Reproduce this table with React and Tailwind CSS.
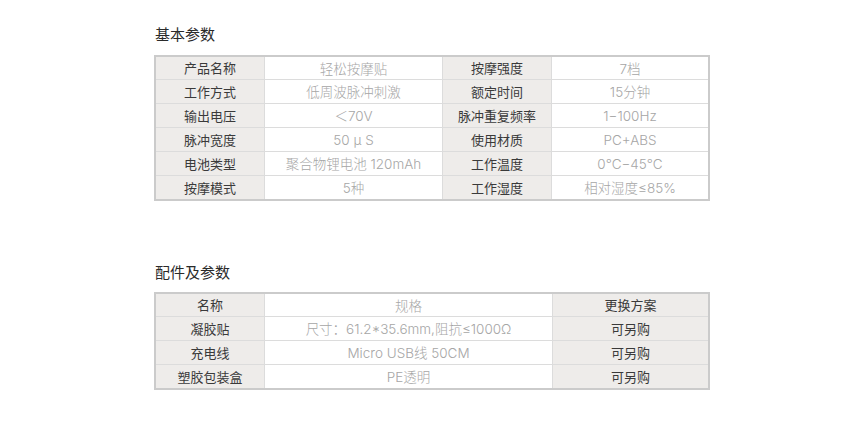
export default function App() {
  const basic = [
    ["产品名称", "轻松按摩贴", "按摩强度", "7档"],
    ["工作方式", "低周波脉冲刺激", "额定时间", "15分钟"],
    ["输出电压", "＜70V", "脉冲重复频率", "1−100Hz"],
    ["脉冲宽度", "50 μ S", "使用材质", "PC+ABS"],
    ["电池类型", "聚合物锂电池 120mAh", "工作温度", "0℃−45℃"],
    ["按摩模式", "5种", "工作湿度", "相对湿度≤85%"],
  ];

  const parts = [
    ["凝胶贴", "尺寸：61.2*35.6mm,阻抗≤1000Ω", "可另购"],
    ["充电线", "Micro USB线 50CM", "可另购"],
    ["塑胶包装盒", "PE透明", "可另购"],
  ];

  const label = "flex items-center justify-center bg-[#eeecea] text-[#3a3a3a] leading-[20px]";
  const value = "flex items-center justify-center bg-white text-[#a6a6a6] font-light text-[13.5px] leading-[20px] pt-[1px]";
  const valueFont = { fontFamily: 'Inter, "Noto Sans CJK SC", sans-serif' };

  return (
    <div
      className="w-[856px] h-[432px] bg-white pl-[154px] pt-[24px] text-[13px]"
      style={{ fontFamily: '"Noto Sans CJK SC", "Noto Sans", sans-serif' }}
    >
      <h2 className="h-[20px] leading-[20px] text-[15px] text-[#2a2a2a] pl-[1px]">基本参数</h2>

      <div className="mt-[11px] w-[556px] border-2 border-[#cbcbcb]">
        {basic.map((r, i) => (
          <div key={i} className={`flex ${i > 0 ? "h-[24px] border-t border-[#dcdcdc]" : "h-[22px]"}`}>
            <div className={`${label} w-[109px] border-r border-[#dcdcdc]`}>{r[0]}</div>
            <div className={`${value} w-[178px] border-r border-[#dcdcdc]`} style={valueFont}>{r[1]}</div>
            <div className={`${label} w-[109px] border-r border-[#dcdcdc]`}>{r[2]}</div>
            <div className={`${value} flex-1`} style={valueFont}>{r[3]}</div>
          </div>
        ))}
      </div>

      <h2 className="mt-[61px] h-[20px] leading-[20px] text-[15px] text-[#2a2a2a] pl-[1px]">配件及参数</h2>

      <div className="mt-[10px] w-[556px] border-2 border-[#cbcbcb]">
        <div className="flex h-[22px]">
          <div className={`${label} w-[109px] border-r border-[#dcdcdc]`}>名称</div>
          <div className={`${value} w-[288px] border-r border-[#dcdcdc]`} style={valueFont}>规格</div>
          <div className={`${label} flex-1`}>更换方案</div>
        </div>
        {parts.map((r, i) => (
          <div key={i} className="flex h-[24px] border-t border-[#dcdcdc]">
            <div className={`${label} w-[109px] border-r border-[#dcdcdc]`}>{r[0]}</div>
            <div className={`${value} w-[288px] border-r border-[#dcdcdc]`} style={valueFont}>{r[1]}</div>
            <div className={`${label} flex-1`}>{r[2]}</div>
          </div>
        ))}
      </div>
    </div>
  );
}
